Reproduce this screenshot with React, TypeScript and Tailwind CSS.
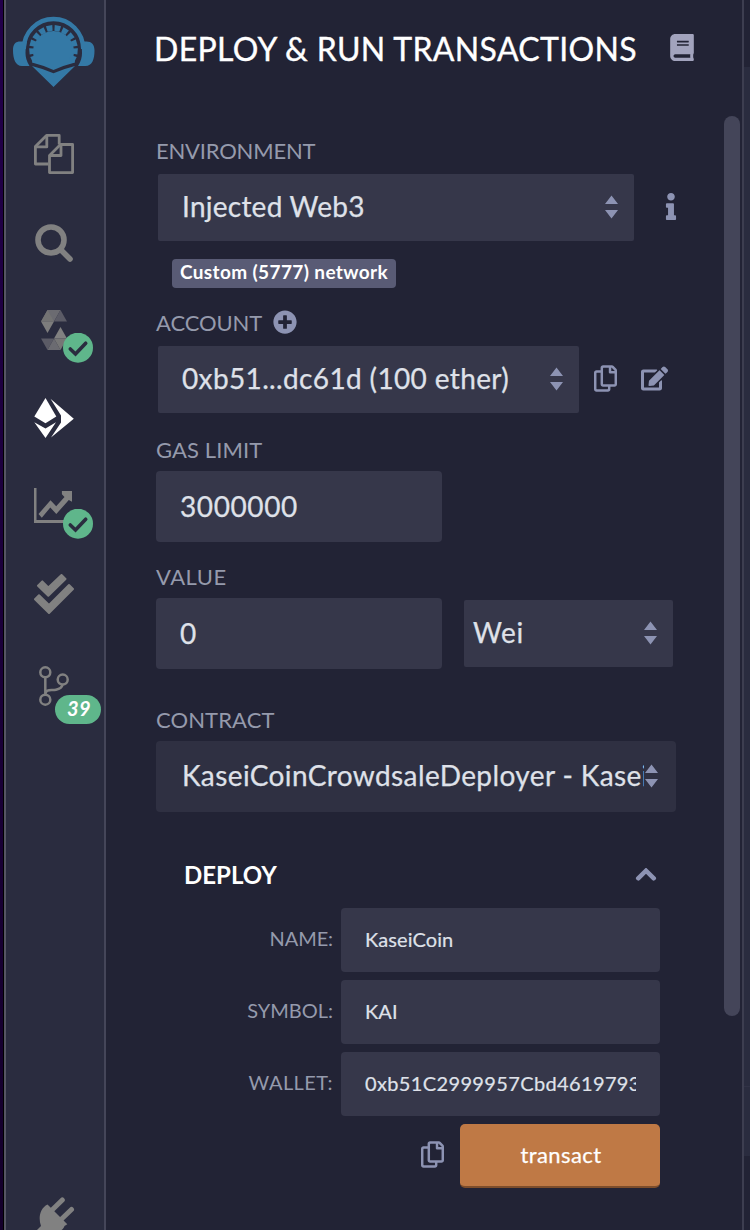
import type { ReactNode } from "react";
import { FaBook, FaInfo, FaPlusCircle, FaRegCopy, FaEdit } from "react-icons/fa";

function RemixLogo() {
  const teeth = Array.from({ length: 12 }, (_, i) => -205.5 + i * 21);
  return (
    <svg className="block h-[74px] w-[84px]" viewBox="0 0 84 74" fill="#3479a6">
      <path d="M11.800 34 A29.700 30 0 0 1 71.200 34" fill="none" stroke="#3479a6" strokeWidth="4.300" />
      <path d="M13 26.500H8.500C3.500 26.500 1 29 1 35c0 9 2.500 16 9 16h7.500c-3-5-4-9-4-13 0-4 .5-8 1.500-11z" />
      <path d="M70 26.500h4.500c5 0 8 3 8 9 0 9-2.500 15.500-9 15.500H66c3-5 4-9 4-13 0-4-.5-8-1.500-11z" />
      <path d="M21.500 41 A20.500 20.500 0 1 1 61.500 41 L63 47.500 Q51 50.500 41.500 55 Q32 50.500 20 47.500Z" />
      <g fill="#3479a6">
        {teeth.map((a) => (
          <path key={a} d="M60 32L65.700 31.300V37.700L60 37Z" transform={`rotate(${a} 41.5 34.5)`} />
        ))}
      </g>
      <path d="M20 51 Q32 54 41.500 58.300 Q51 54 63 51 L41.500 72Z" />
    </svg>
  );
}

function CheckBadge() {
  return (
    <svg className="absolute left-[57px] top-[47px] h-[30px] w-[30px]" viewBox="0 0 30 30">
      <circle cx="15" cy="14.700" r="15" fill="#5fb68b" />
      <path d="M7.300 16l5.200 5 10.200-10.800" fill="none" stroke="#2a2c3f" strokeWidth="3.600" strokeLinecap="round" />
    </svg>
  );
}

function Cell({ children }: { children: ReactNode }) {
  return <div className="relative flex h-[88px] shrink-0 items-center justify-center">{children}</div>;
}

function Sidebar() {
  return (
    <aside className="flex w-[102px] shrink-0 flex-col overflow-hidden border-x-2 border-l-[#555563] border-r-[#454659] bg-[#2a2c3f]">
      <div className="flex h-[110px] shrink-0 justify-center pr-[2px] pt-[15px]">
        <RemixLogo />
      </div>
      <Cell>
        <svg className="mr-[2px] h-10 w-10" viewBox="0 0 40 40" fill="none" stroke="#818181" strokeWidth="2.800" strokeLinejoin="round">
          <path d="M25.200 10.500V1.400H12.500L1.400 12.500V30H14.300" />
          <path d="M12.800 1.400V12.900H1.400" />
          <path d="M38.600 10.500H26.500L15.500 21.500V38.600H38.600Z" />
          <path d="M27 10.500V21.500H15.500" />
        </svg>
      </Cell>
      <Cell>
        <svg className="mr-[2px] mt-[2px] h-[38px] w-[38px]" viewBox="0 0 38 38" fill="none" stroke="#818181">
          <circle cx="16" cy="16" r="13" strokeWidth="5.600" />
          <path d="M25.500 25.500L35 35" strokeWidth="5.600" strokeLinecap="round" />
        </svg>
      </Cell>
      <Cell>
        <svg className="mr-[2px] h-10 w-[26px]" viewBox="0 0 26 40">
          <path d="M6.500 0h13L13 11.500H0z" fill="#6b6b71" />
          <path d="M19.500 0L26 11.500H13z" fill="#5b5b66" />
          <path d="M6.500 0L13 11.500H0z" fill="#737373" />
          <path d="M0 11.500h13L6.500 23z" fill="#7d7d7d" />
          <path d="M19.500 17L26 28.500H13z" fill="#818181" />
          <path d="M0 28.500h13L6.500 40z" fill="#5b5b66" />
          <path d="M13 28.500L19.500 40h-13z" fill="#6b6b71" />
          <path d="M13 28.500h13L19.500 40z" fill="#767676" />
        </svg>
        <CheckBadge />
      </Cell>
      <Cell>
        <svg className="mr-[2px] h-10 w-10" viewBox="0 0 40 40" fill="#fff">
          <path d="M11.500 0L22.300 18.500 11.500 25.300 0.300 18.500z" />
          <path d="M0.300 24.300L11.500 30.500 22 24.300 11.500 40z" />
          <path d="M16.500 0.800L39.800 20.700 17 39.500 27 24.500V17.500z" />
        </svg>
      </Cell>
      <Cell>
        <svg className="mr-[4px] h-9 w-[38px]" viewBox="0 0 38 36" fill="#818181">
          <path d="M0 0h2.500v32H38v3H0z" />
          <path d="M4.500 26l12-13.700 5.700 6 8.300-9.300-2.600-2.700V3H38V13.800l-3.200-1.700L22.300 26l-6-6.500-8.500 10.300z" />
        </svg>
        <CheckBadge />
      </Cell>
      <Cell>
        <svg className="mr-[2px] h-10 w-10" viewBox="0 0 40 40" fill="#818181" stroke="#818181" strokeWidth="2" strokeLinejoin="round">
          <path d="M4 11.700l4.300-4.300 6 6L27.500 1 31.500 5 14.300 21.800z" />
          <path d="M1 25.200l4-4 10 9.800L35 11l4 4L15 39z" />
        </svg>
      </Cell>
      <Cell>
        <svg className="mt-[8px] mr-[2px] h-10 w-[30px]" viewBox="0 0 30 40" fill="none" stroke="#818181" strokeWidth="2.500">
          <circle cx="6.300" cy="6.300" r="5" />
          <circle cx="6.300" cy="33.700" r="5" />
          <circle cx="23.700" cy="13.600" r="5" />
          <path d="M6.300 11.400V28.600M6.300 28.600C7 22 12.500 25 17 23.700C21 22.800 23 21.500 23.500 18.700" />
        </svg>
        <span className="absolute left-[49px] top-[57px] flex h-[29px] w-[46px] items-center justify-center rounded-full bg-[#5fb68b] pb-[3px] pl-[2px] text-[20px] font-bold italic leading-6 tracking-[0.3px] text-white">
          39
        </span>
      </Cell>
      <div className="mt-auto flex h-[33px] shrink-0 pl-[29px]">
        <svg className="h-[40px] w-[40px] shrink-0" viewBox="0 0 40 40" fill="#818181">
          <g transform="translate(3 0)">
            <path d="M12 15L24.300 3" stroke="#818181" strokeWidth="5" strokeLinecap="round" />
            <path d="M21.500 24L33.500 12.500" stroke="#818181" strokeWidth="5" strokeLinecap="round" />
            <path d="M9.500 7.500L29.300 27.300 26.500 29C24 36 14 37 8 33L0 40-4 36 3 29C0 21 2 11 9.500 7.500z" />
          </g>
        </svg>
      </div>
    </aside>
  );
}

function Arrows() {
  return (
    <svg className="-mt-[1px] h-[24px] w-[13px] shrink-0" viewBox="0 0 13 24" fill="#8d93b3">
      <path d="M6.500 0.500L13 9H0zM0 15h13L6.500 23.500z" />
    </svg>
  );
}

function Label({ className, children }: { className: string; children: ReactNode }) {
  return <div className={`flex h-[22px] shrink-0 items-center whitespace-nowrap text-[22px] leading-[22px] text-[#959aac] ${className}`}>{children}</div>;
}

const box = "flex items-center whitespace-nowrap bg-[#36374a] text-[28px] leading-[34px] text-[#dfe1e9] [-webkit-text-stroke:0.25px]";

function Param({ label, value, labelTrack, valueTrack }: { label: string; value: string; labelTrack: string; valueTrack: string }) {
  return (
    <div className="flex h-16 items-center justify-end">
      <span className={`-mt-[4px] mr-[8px] text-[20px] leading-6 text-[#959aac] ${labelTrack}`}>{label}</span>
      <div className="flex h-16 w-[319px] items-center rounded bg-[#36374a] px-6 text-[20px] leading-6 text-[#dfe1e9] [-webkit-text-stroke:0.2px]">
        <span className={`-mt-[2px] overflow-hidden whitespace-nowrap ${valueTrack}`}>{value}</span>
      </div>
    </div>
  );
}

export default function App() {
  return (
    <div className="flex h-[1230px] w-[750px] overflow-hidden bg-[#222335] font-['Lato',sans-serif]">
      <div className="w-[4px] shrink-0 border-r border-black bg-gradient-to-b from-[#22004a] to-[#14002b]" />
      <Sidebar />

      <main className="flex w-[618px] shrink-0 flex-col pl-[50px]">
        <header className="flex h-[98px] shrink-0 items-center">
          <h1 className="-ml-[2px] whitespace-nowrap text-[32px] leading-[38px] tracking-[0.34px] text-white [-webkit-text-stroke:0.35px]">DEPLOY &amp; RUN TRANSACTIONS</h1>
          <FaBook className="-mt-[3px] ml-[33px] h-[27px] w-[24px] text-[#a2a3bd]" />
        </header>

        <Label className="mt-[42px] tracking-[-0.2px]">ENVIRONMENT</Label>
        <div className="mt-[12px] flex items-center pl-[2px]">
          <div className={`${box} h-[67px] w-[476px] justify-between rounded-[2px] pl-[24px] pr-[16px]`}>
            <span className="-mt-[4px] tracking-[0.25px]">Injected Web3</span>
            <Arrows />
          </div>
          <FaInfo className="-mt-[2px] ml-[31px] h-[27px] w-[12px] text-[#8d93b3]" />
        </div>
        <div className="ml-[16px] mt-[18px] flex h-[29px] w-[224px] shrink-0 items-center justify-center whitespace-nowrap rounded bg-[#595b75] pb-[3px] text-[19px] font-bold leading-6 tracking-[0.38px] text-white">
          Custom (5777) network
        </div>

        <Label className="mt-[24px] tracking-[-0.1px]">
          ACCOUNT
          <FaPlusCircle className="-mt-[2px] ml-[11px] h-6 w-6 text-[#8d93b3]" />
        </Label>
        <div className="mt-[12px] flex items-center pl-[2px]">
          <div className={`${box} h-[67px] w-[421px] justify-between rounded-[2px] pl-[24px] pr-[16px]`}>
            <span className="-mt-[4px] tracking-[0.36px]">0xb51...dc61d (100 ether)</span>
            <Arrows />
          </div>
          <FaRegCopy className="-mt-[2px] ml-[15px] h-[27px] w-[23px] text-[#8d93b3]" />
          <FaEdit className="-mt-[2px] ml-[24px] h-[27px] w-[27px] text-[#8d93b3]" />
        </div>

        <Label className="mt-[26px] tracking-[0.1px]">GAS LIMIT</Label>
        <div className={`${box} mt-[10px] h-[71px] w-[286px] shrink-0 rounded pl-[24px]`}>
          <span className="-mt-[2px] tracking-[0.6px]">3000000</span>
        </div>

        <Label className="mt-[24px] tracking-[0.5px]">VALUE</Label>
        <div className="mt-[10px] flex items-center">
          <div className={`${box} h-[71px] w-[286px] rounded pl-[24px]`}>
            <span className="-mt-[2px]">0</span>
          </div>
          <div className={`${box} ml-[22px] h-[67px] w-[209px] justify-between rounded-[2px] pl-[9px] pr-[16px]`}>
            <span className="-mt-[3px] tracking-[0.6px]">Wei</span>
            <Arrows />
          </div>
        </div>

        <Label className="mt-[40px] tracking-[0.1px]">CONTRACT</Label>
        <div className="mt-[10px] flex h-[71px] w-[520px] shrink-0 items-center rounded bg-[#2f3042] pl-[26px] text-[28px] leading-[34px] text-[#dfe1e9] [-webkit-text-stroke:0.25px]">
          <span className="-mt-[4px] w-[462px] overflow-hidden whitespace-nowrap tracking-[0.4px]">KaseiCoinCrowdsaleDeployer - KaseiCoin</span>
          <span className="ml-[1px] flex">
            <Arrows />
          </span>
        </div>

        <section className="mt-[52px] flex w-[504px] flex-col">
          <div className="flex h-[22px] items-center justify-between pl-[28px] pr-[3px]">
            <h2 className="text-[24px] font-bold leading-[22px] text-white">DEPLOY</h2>
            <svg className="h-[14px] w-[22px]" viewBox="0 0 22 14" fill="none" stroke="#8d93b3" strokeWidth="4.500" strokeLinecap="round">
              <path d="M3.200 10.300L11 2.700l7.800 7.600" />
            </svg>
          </div>
          <div className="mt-[22px] flex flex-col gap-2">
            <Param label="NAME:" value="KaseiCoin" labelTrack="tracking-[-0.1px]" valueTrack="tracking-[0.1px]" />
            <Param label="SYMBOL:" value="KAI" labelTrack="" valueTrack="tracking-[0.1px]" />
            <Param label="WALLET:" value="0xb51C2999957Cbd4619793dc61d" labelTrack="tracking-[0.45px]" valueTrack="tracking-[0.36px]" />
          </div>
          <div className="mt-[8px] flex items-center justify-end">
            <FaRegCopy className="-mt-[3px] mr-[16px] h-[27px] w-[23px] text-[#8d93b3]" />
            <button className="h-16 w-[200px] rounded-[5px] border-b-2 border-[#7d4d2b] bg-[#bf7945] pl-[2px] text-[22px] leading-6 tracking-[0.4px] text-white [-webkit-text-stroke:0.25px]">
              transact
            </button>
          </div>
        </section>
      </main>

      <div className="w-[18px] shrink-0 pt-[116px]">
        <div className="h-[900px] w-[16px] rounded-full bg-[#444559]" />
      </div>
      <div className="flex w-[8px] shrink-0 flex-col border-l-2 border-[#3d3e50] bg-[#2a2c3f]">
        <div className="h-[67px] bg-[#222335]" />
        <div className="mt-auto h-[70px] border-t border-[#313246]" />
        <div className="h-[74px] bg-[#222335]" />
      </div>
    </div>
  );
}
